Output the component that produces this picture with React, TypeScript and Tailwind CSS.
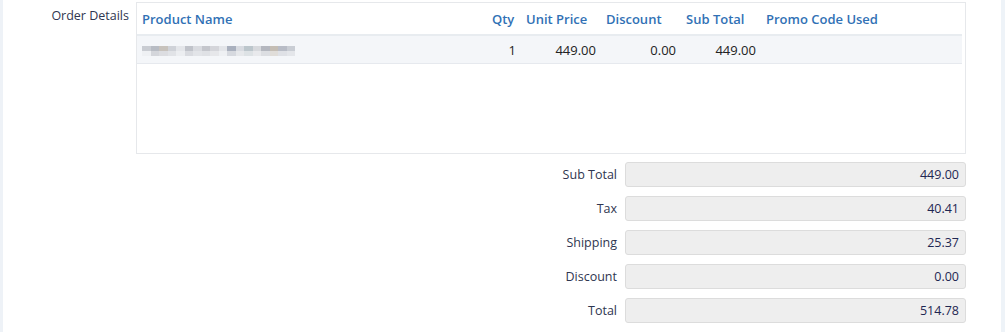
import React from "react";

const pixels = [
  ["#c9ccd2", "#b8bcc4", "#c7c2bc", "#cfd2d8", "#e4e6ea", "#c0c3ca", "#d9dbe0", "#c4c6cc", "#d4d5da", "#e3e5e9", "#a9b0be", "#d8dbe1", "#bcc6cc", "#d7d9dd", "#b4b7bf", "#c4bdb4", "#b8bcc6", "#c9cdd4"],
  ["#eef0f3", "#d4d6db", "#dcdde1", "#e1e3e7", "#eceef1", "#d9dbe0", "#e2e4e8", "#dfe1e5", "#e6e7ea", "#eef0f3", "#d6d9df", "#e6e8eb", "#dde2e5", "#e8e9ec", "#dcdee2", "#e0ddd9", "#dfe1e6", "#e4e6ea"],
];

const cols = "grid grid-cols-[350px_34px_80px_80px_80px_1fr]";

const totals = [
  { label: "Sub Total", value: "449.00" },
  { label: "Tax", value: "40.41" },
  { label: "Shipping", value: "25.37" },
  { label: "Discount", value: "0.00" },
  { label: "Total", value: "514.78" },
];

export default function App() {
  return (
    <div className="w-[1005px] h-[332px] bg-white flex font-['Open_Sans',sans-serif] text-[12.5px] overflow-hidden">
      <div className="w-[3px] bg-[#eef2f7]" />
      <div className="w-[998px] pt-[2px]">
        <div className="flex">
          <div className="w-[133px] pr-[7px] pt-[5px] text-right text-[#2f3650]">Order Details</div>
          <div className="w-[830px] h-[152px] border border-[#e6e8eb] pr-[3px]">
            <div className={`${cols} h-[33px] pt-[3px] items-center border-b-2 border-[#e8ecf0] font-semibold text-[13px] text-[#3171b5]`}>
              <div className="px-[5px]">Product Name</div>
              <div className="px-[5px]">Qty</div>
              <div className="px-[5px]">Unit Price</div>
              <div className="px-[5px]">Discount</div>
              <div className="px-[5px]">Sub Total</div>
              <div className="px-[5px]">Promo Code Used</div>
            </div>
            <div className={`${cols} h-[28px] pt-[3px] items-center bg-[#f4f6f9] border-b border-[#e6e9ee] text-[#222] text-[13px]`}>
              <div className="px-[5px] flex flex-col">
                {pixels.map((row, i) => (
                  <div key={i} className="flex">
                    {row.map((c, j) => (
                      <div key={j} className="w-[8.5px] h-[5px]" style={{ backgroundColor: c }} />
                    ))}
                  </div>
                ))}
              </div>
              <div className="px-[5px] text-right">1</div>
              <div className="px-[5px] text-right">449.00</div>
              <div className="px-[5px] text-right">0.00</div>
              <div className="px-[5px] text-right">449.00</div>
              <div className="px-[5px]" />
            </div>
          </div>
        </div>
        <div className="flex flex-col gap-[9px] mt-[8px]">
          {totals.map((t) => (
            <div key={t.label} className="flex items-center">
              <div className="w-[614px] pt-[2px] text-right text-[#2f3650]">{t.label}</div>
              <div className="ml-[8px] w-[341px] h-[25px] pt-[2px] rounded-[3px] border border-[#dcdcdc] bg-[#eeeeee] flex items-center justify-end pr-[6px] text-[#1f2752]">
                {t.value}
              </div>
            </div>
          ))}
        </div>
      </div>
      <div className="w-[4px] bg-[#eef3f8]" />
    </div>
  );
}
